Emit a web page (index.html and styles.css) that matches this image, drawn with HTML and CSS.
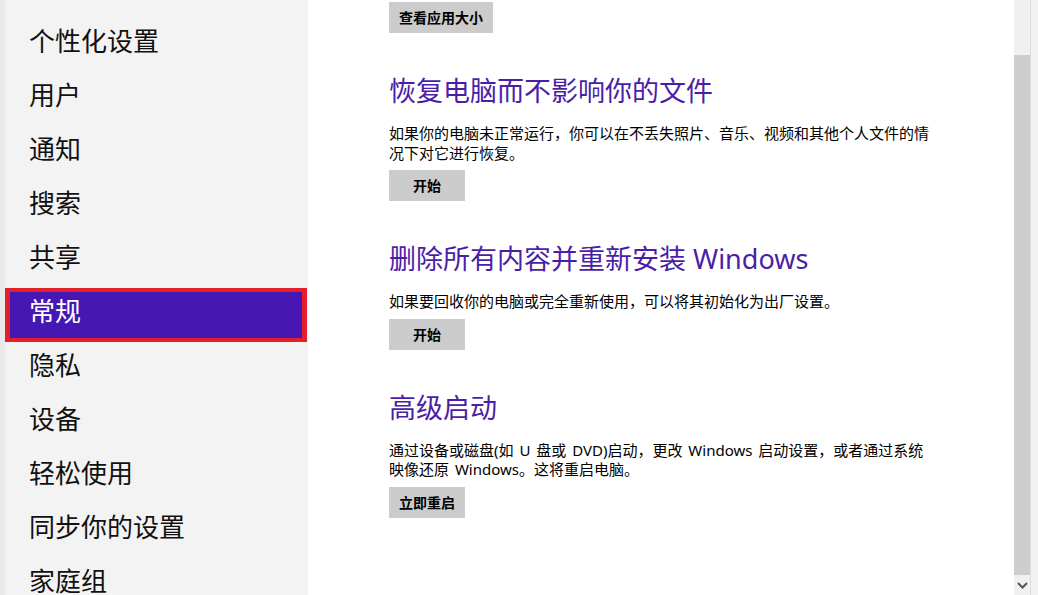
FILE: index.html
```html
<!DOCTYPE html>
<html lang="zh-CN">
<head>
<meta charset="utf-8">
<title>电脑设置 - 常规</title>
<link rel="stylesheet" href="styles.css">
</head>
<body>
<div class="app">
  <nav class="sidebar">
    <ul class="menu">
      <li class="item">个性化设置</li>
      <li class="item">用户</li>
      <li class="item">通知</li>
      <li class="item">搜索</li>
      <li class="item">共享</li>
      <li class="item selected">常规</li>
      <li class="item">隐私</li>
      <li class="item">设备</li>
      <li class="item">轻松使用</li>
      <li class="item">同步你的设置</li>
      <li class="item">家庭组</li>
    </ul>
  </nav>
  <main class="content">
    <button class="btn btn-wide">查看应用大小</button>

    <section class="section">
      <h2 class="title">恢复电脑而不影响你的文件</h2>
      <p class="desc">如果你的电脑未正常运行，你可以在不丢失照片、音乐、视频和其他个人文件的情况下对它进行恢复。</p>
      <button class="btn">开始</button>
    </section>

    <section class="section">
      <h2 class="title">删除所有内容并重新安装 Windows</h2>
      <p class="desc">如果要回收你的电脑或完全重新使用，可以将其初始化为出厂设置。</p>
      <button class="btn">开始</button>
    </section>

    <section class="section">
      <h2 class="title">高级启动</h2>
      <p class="desc">通过设备或磁盘(如 U 盘或 DVD)启动，更改 Windows 启动设置，或者通过系统映像还原 Windows。这将重启电脑。</p>
      <button class="btn">立即重启</button>
    </section>
  </main>
  <div class="scrollbar">
    <div class="track">
      <div class="thumb"></div>
      <div class="arrow">
        <svg width="11" height="7" viewBox="0 0 11 7"><path d="M1 1 L5.5 5.5 L10 1" fill="none" stroke="#555" stroke-width="2"/></svg>
      </div>
    </div>
    <div class="edge"></div>
  </div>
</div>
</body>
</html>
```
FILE: styles.css
```css
html, body {
  margin: 0;
  padding: 0;
  height: 100%;
  overflow: hidden;
  background: #ffffff;
}

body {
  font-family: "Microsoft YaHei", "Noto Sans", "Noto Sans CJK SC", sans-serif;
  color: #000;
}

.app {
  display: flex;
  height: 595px;
  overflow: hidden;
}

.sidebar {
  width: 303px;
  flex: none;
  background: #f3f3f3;
  border-left: 5px solid #e9e9e9;
  overflow: hidden;
}

.menu {
  list-style: none;
  margin: 0;
  padding: 18px 0 0 0;
}

.item {
  height: 54px;
  line-height: 38px;
  padding-left: 24px;
  font-size: 26px;
  color: #111;
  box-sizing: border-box;
  border: 4px solid transparent;
  border-left-width: 0;
  white-space: nowrap;
}

.item.selected {
  background: #4617b3;
  color: #fff;
  border: 4px solid #e41f2c;
  border-left-width: 5px;
  border-right-width: 5px;
  padding-left: 19px;
  margin-right: 1px;
}

.content {
  flex: 1;
  padding: 2px 0 0 81px;
  overflow: hidden;
}

.btn {
  display: block;
  border: none;
  margin: 0;
  background: #cccccc;
  color: #000;
  font-family: "Microsoft YaHei", "Noto Sans CJK SC", sans-serif;
  font-weight: bold;
  font-size: 14px;
  width: 76px;
  height: 31px;
  padding: 0;
  line-height: 31px;
}

.btn-wide {
  width: 104px;
}

.section {
  margin-top: 40px;
  width: 548px;
}

.title {
  margin: 0;
  font-weight: normal;
  font-size: 27px;
  line-height: 36px;
  color: #4b1ea7;
  white-space: nowrap;
}

.desc {
  margin: 15px 0 7px 0;
  font-size: 15px;
  line-height: 19.5px;
  word-spacing: 2px;
  color: #000;
}

.scrollbar {
  width: 24px;
  flex: none;
  display: flex;
  height: 595px;
}

.track {
  width: 16px;
  background: #f0f0f0;
  display: flex;
  flex-direction: column;
}

.thumb {
  margin: 55px 0 0 0;
  height: 520px;
  background: #cdcdcd;
}

.arrow {
  flex: 1;
  display: flex;
  align-items: center;
  justify-content: center;
}

.edge {
  flex: 1;
  background: #f1f1f1;
  border-left: 1px solid #dcdcdc;
}
```
